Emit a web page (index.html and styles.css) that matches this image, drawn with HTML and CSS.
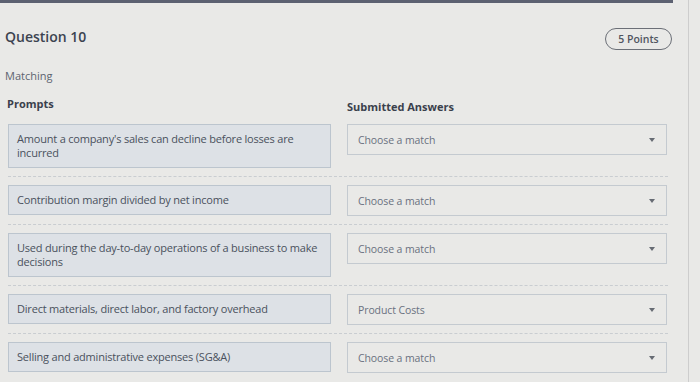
FILE: index.html
```html
<!DOCTYPE html>
<html lang="en">
<head>
<meta charset="UTF-8" />
<meta name="viewport" content="width=device-width, initial-scale=1" />
<title>Question 10</title>
<link rel="stylesheet" href="styles.css">
</head>
<body>

<div class="page">
  <div class="top-bar"></div>

  <!-- HEADER -->
  <div class="question-head">
    <h2 class="question-title">Question 10</h2>
    <span class="points">5 Points</span>
  </div>

  <p class="question-type">Matching</p>

  <!-- MATCHING TABLE -->
  <div class="matching">
    <div class="col-heads">
      <h3>Prompts</h3>
      <h3>Submitted Answers</h3>
    </div>

    <div class="match-row">
      <div class="prompt">Amount a company's sales can decline before losses are incurred</div>
      <div class="answer"><span>Choose a match</span><span class="caret"></span></div>
    </div>
    <div class="match-row">
      <div class="prompt">Contribution margin divided by net income</div>
      <div class="answer"><span>Choose a match</span><span class="caret"></span></div>
    </div>
    <div class="match-row">
      <div class="prompt">Used during the day-to-day operations of a business to make decisions</div>
      <div class="answer"><span>Choose a match</span><span class="caret"></span></div>
    </div>
    <div class="match-row">
      <div class="prompt">Direct materials, direct labor, and factory overhead</div>
      <div class="answer"><span>Product Costs</span><span class="caret"></span></div>
    </div>
    <div class="match-row">
      <div class="prompt">Selling and administrative expenses (SG&amp;A)</div>
      <div class="answer"><span>Choose a match</span><span class="caret"></span></div>
    </div>
  </div>
</div>

</body>
</html>
```

FILE: styles.css
```css
/* Reset */
*, *::before, *::after {
  box-sizing: border-box;
}
body, h2, h3, p {
  margin: 0;
  padding: 0;
}

:root {
  --bg: #e9e9e7;
  --text: #414855;
  --muted: #5d6470;
  --prompt-bg: #dde1e6;
  --prompt-border: #bcc5ce;
  --answer-border: #c4cad0;
  --divider: #c9cdd1;
}

body {
  background: var(--bg);
  font-family: "Open Sans", "Noto Sans", sans-serif;
  color: var(--text);
  overflow: hidden;
}

.page {
  width: 689px;
  height: 382px;
  border-right: 1px solid #cdcdcd;
  padding: 0 16px 0 5px;
}

.top-bar {
  height: 3px;
  margin: 0 0 0 -5px;
  width: 673px;
  background: #5c6171;
}

/* Header */
.question-head {
  display: flex;
  justify-content: space-between;
  align-items: flex-start;
  margin-top: 25px;
}
.question-title {
  font-size: 14px;
  font-weight: 600;
  line-height: 20px;
  margin-top: -1px;
  color: #3c4350;
}
.points {
  display: inline-block;
  height: 22px;
  width: 67px;
  line-height: 20px;
  text-align: center;
  border: 1px solid #6b6f77;
  border-radius: 11px;
  font-size: 10.5px;
  font-weight: 600;
  color: #50555f;
}

.question-type {
  margin-top: 18px;
  font-size: 11px;
  line-height: 15px;
  color: var(--muted);
}

/* Matching table */
.matching {
  margin: 13px 0 0 3px;
}
.col-heads {
  display: grid;
  grid-template-columns: 323px 320px;
  column-gap: 16px;
  margin-bottom: 2px;
}
.col-heads h3 {
  font-size: 11px;
  font-weight: 700;
  line-height: 15px;
  color: #3a404c;
}
.col-heads h3:first-child {
  margin-left: -1px;
}
.col-heads h3:last-child {
  padding-top: 3px;
}

.match-row {
  display: grid;
  grid-template-columns: 323px 320px;
  column-gap: 16px;
  align-items: start;
  padding: 8px 0;
  border-bottom: 1px dashed var(--divider);
  width: 660px;
}
.match-row:last-child {
  border-bottom: none;
}

.prompt {
  background: var(--prompt-bg);
  border: 1px solid var(--prompt-border);
  padding: 7px 4px 7px 8px;
  font-size: 11px;
  line-height: 14px;
  color: #4a515d;
  letter-spacing: -0.2px;
}

.answer {
  display: flex;
  justify-content: space-between;
  align-items: center;
  height: 31px;
  padding: 0 11px 0 10px;
  border: 1px solid var(--answer-border);
  font-size: 10.5px;
  color: #6a7180;
  letter-spacing: -0.1px;
}
.caret {
  width: 0;
  height: 0;
  border-left: 3px solid transparent;
  border-right: 3px solid transparent;
  border-top: 4px solid #666b73;
}
```
